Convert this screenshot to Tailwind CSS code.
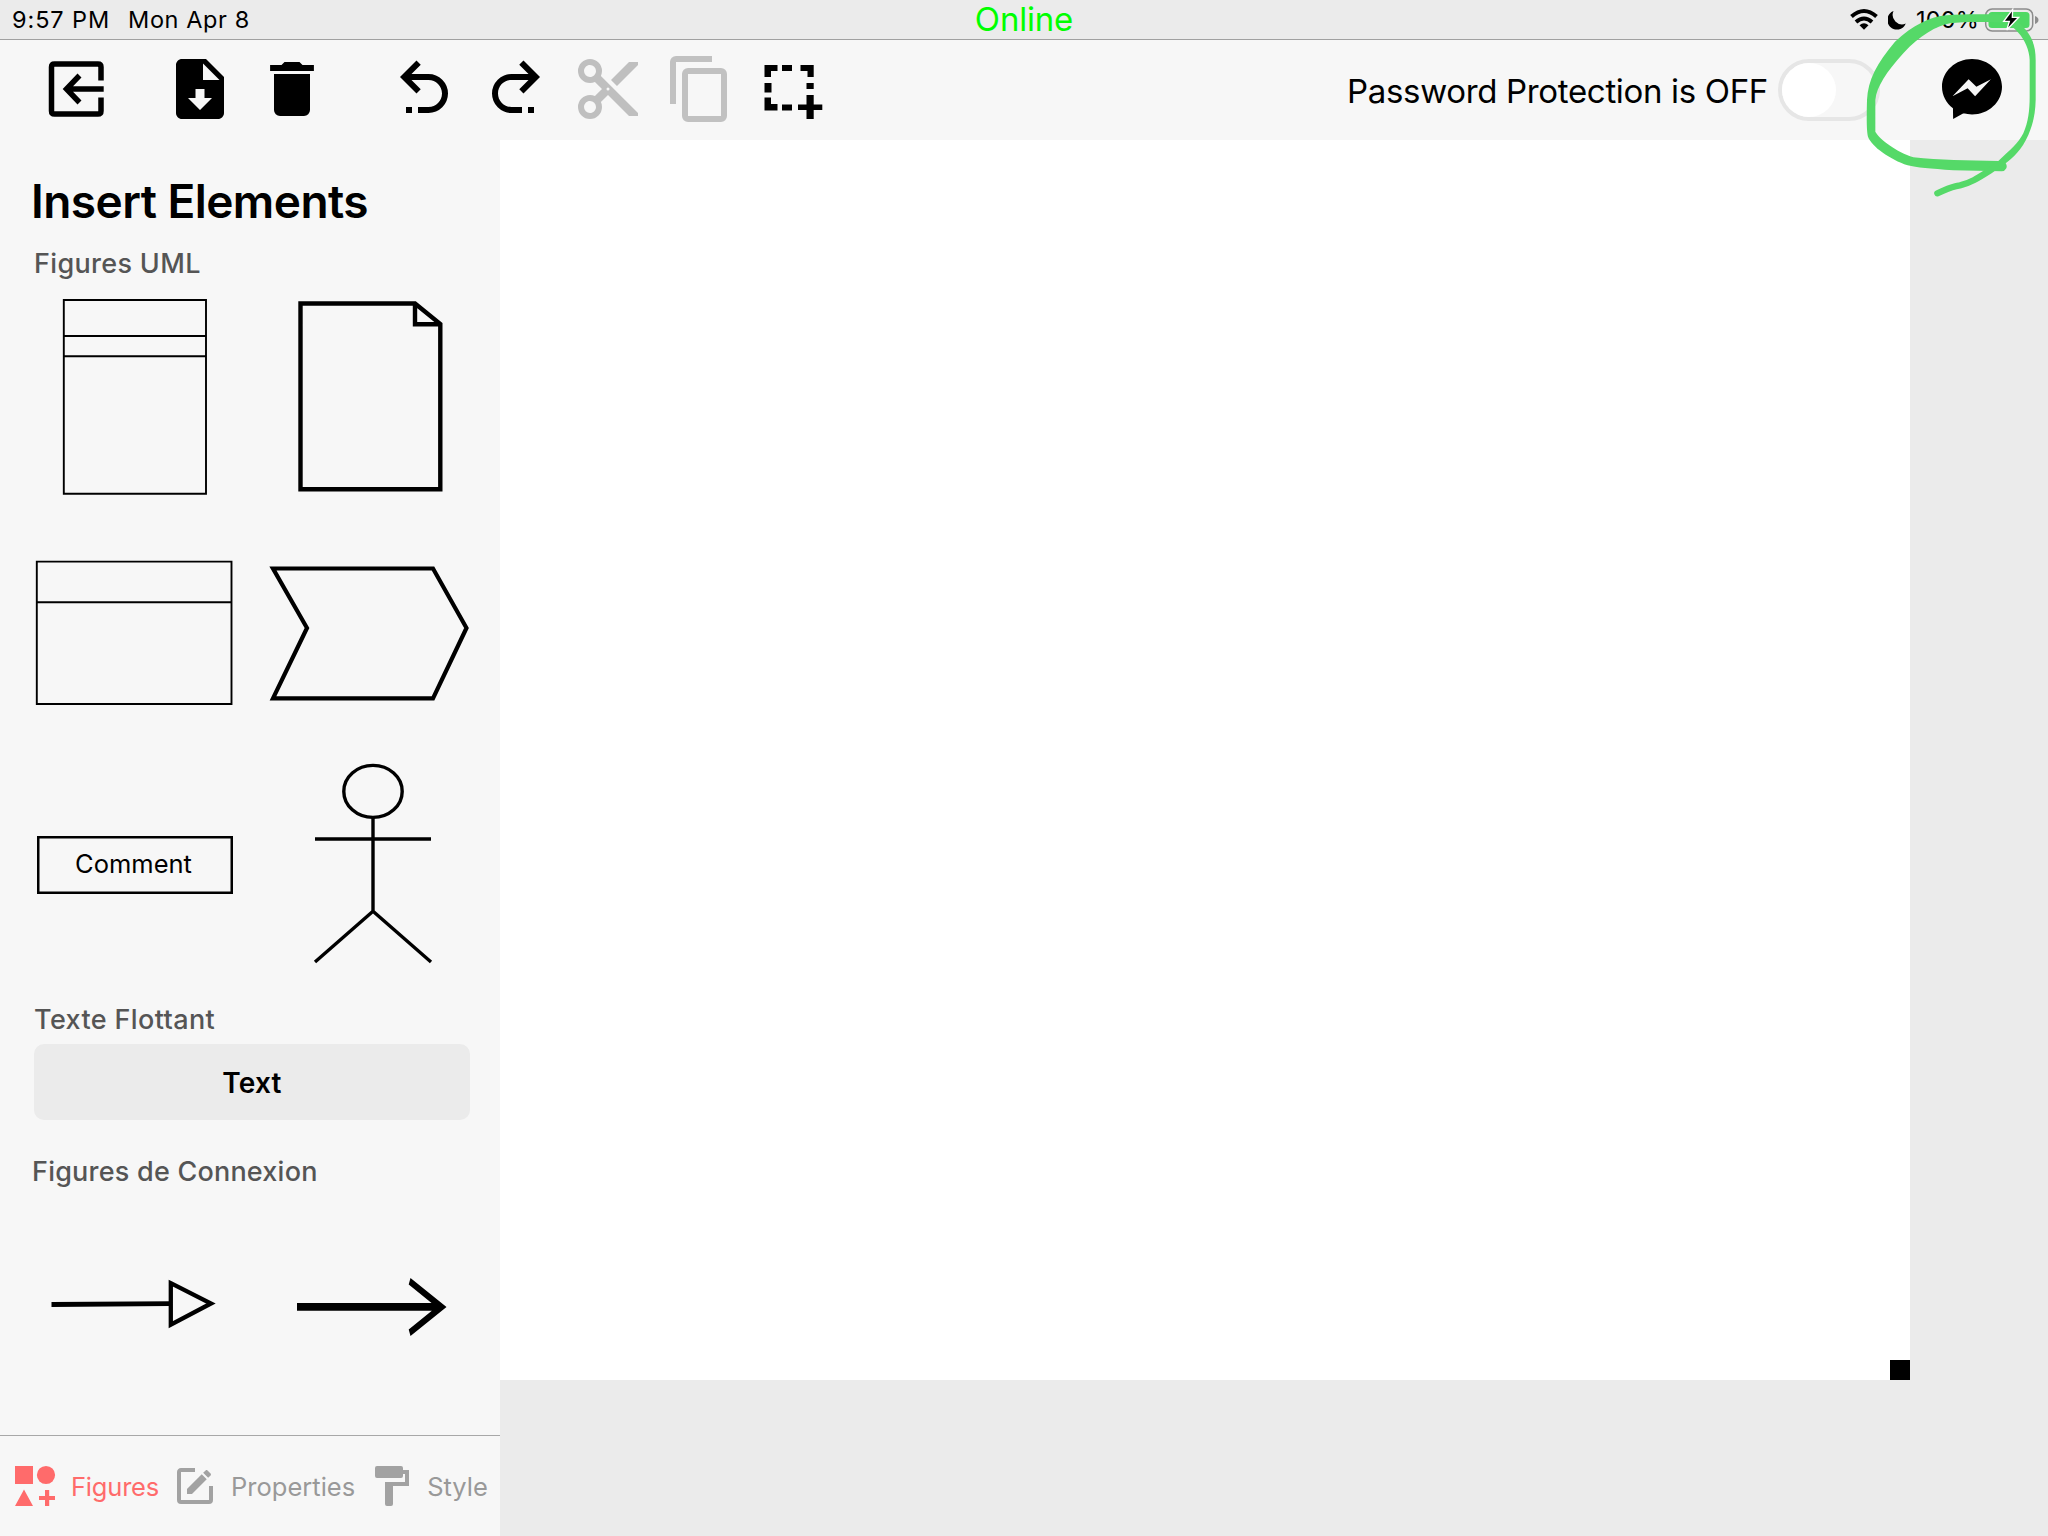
<!DOCTYPE html>
<html lang="en">
<head>
<meta charset="utf-8">
<title>Canvas editor</title>
<script src="https://cdn.jsdelivr.net/npm/@tailwindcss/browser@4"></script>
</head>
<body class="bg-[#ebebeb] text-black font-['Inter',sans-serif]">
<div class="relative w-[2048px] h-[1536px] overflow-hidden flex flex-col">
  <!-- Status bar -->
  <header class="h-10 shrink-0 border-b border-[#a0a0a0] grid grid-cols-[1fr_auto_1fr] items-center">
    <div class="flex items-center pl-3 pt-px gap-[18px] text-[23.5px] leading-[38px]">
      <span class="tracking-[0.9px]">9:57 PM</span>
      <span class="tracking-[0.6px]">Mon Apr 8</span>
    </div>
    <span class="text-[33px] leading-[39px] tracking-[-0.2px] text-[#00ff00]">Online</span>
    <div class="flex items-center justify-end">
      <svg class="w-[28px] h-[39px]" viewBox="1849 0 28 39" fill="none" stroke="#000" stroke-width="4">
        <path d="M1850.500 16.500Q1863 5.500 1875.500 16.500M1855 22Q1863 15 1871 22"/>
        <path d="M1858.500 25.200Q1863 21.500 1867.500 25.200L1863 29.800Z" fill="#000" stroke="none"/>
      </svg>
      <svg class="w-[18px] h-[39px] ml-[10px]" viewBox="1887 0 18 39"><path d="M1892.500 11A9.600 9.600 0 1 0 1904.800 23.600A9.500 9.500 0 0 1 1892.500 11Z"/></svg>
      <span class="text-[23.5px] leading-[38px] pt-px ml-[10px] mr-[5px] tracking-[0.2px]">100%</span>
      <svg class="w-[64px] h-[39px]" viewBox="1984 0 64 39">
        <rect x="1985.700" y="9" width="47" height="22" rx="6.500" fill="none" stroke="#8c8c8c" stroke-width="1.500"/>
        <rect x="1988.500" y="12" width="41" height="16" rx="3.500" fill="#4fd964"/>
        <path d="M2035 16Q2038.500 17.500 2038.500 20T2035 24Z" fill="#8c8c8c"/>
      </svg>
    </div>
  </header>

  <!-- Toolbar -->
  <div class="h-[100px] shrink-0 bg-[#f7f7f7] flex pt-[13px]">
    <svg class="w-[72px] h-[72px] ml-10" viewBox="40 53 72 72" fill="none" stroke="#000" stroke-width="5.500">
      <path d="M101 80.500V67Q101 64 98 64H54.500Q51.500 64 51.500 67V111Q51.500 114 54.500 114H98Q101 114 101 111V97.500"/>
      <path d="M103.700 89H68M79.500 75.500L66.500 89L79.500 102.500"/>
    </svg>
    <svg class="w-[72px] h-[72px] ml-[52px]" viewBox="0 0 24 24"><path d="M14,2H6C4.890,2 4,2.890 4,4V20C4,21.110 4.890,22 6,22H18C19.110,22 20,21.110 20,20V8L14,2M12,19L8,15H10.500V12H13.500V15H16L12,19M13,9V3.500L18.500,9H13Z"/></svg>
    <svg class="w-[72px] h-[72px] ml-[20px]" viewBox="0 0 24 24"><path d="M19.300,4H15.500L14.500,3H9.500L8.500,4H4.700V6H19.300M6,19A2,2 0 0,0 8,21H16A2,2 0 0,0 18,19V7H6V19Z"/></svg>
    <svg class="w-[72px] h-[72px] ml-[60px]" viewBox="0 0 24 24"><path d="M13.500,7A6.500,6.500 0 0,1 20,13.500A6.500,6.500 0 0,1 13.500,20H10V18H13.500C16,18 18,16 18,13.500C18,11 16,9 13.500,9H7.830L10.910,12.090L9.500,13.500L4,8L9.500,2.500L10.920,3.910L7.830,7H13.500M6,18H8V20H6V18Z"/></svg>
    <svg class="w-[72px] h-[72px] ml-[20px]" viewBox="0 0 24 24"><path d="M10.500,7A6.500,6.500 0 0,0 4,13.500A6.500,6.500 0 0,0 10.500,20H14V18H10.500C8,18 6,16 6,13.500C6,11 8,9 10.500,9H16.170L13.090,12.090L14.500,13.500L20,8L14.500,2.500L13.080,3.910L16.170,7H10.500M18,18H16V20H18V18Z"/></svg>
    <svg class="w-[72px] h-[72px] ml-[20px]" viewBox="0 0 24 24" fill="#bfbfbf"><path d="M19,3L13,9L15,11L22,4V3M12,12.500A0.500,0.500 0 0,1 11.500,12A0.500,0.500 0 0,1 12,11.500A0.500,0.500 0 0,1 12.500,12A0.500,0.500 0 0,1 12,12.500M6,20A2,2 0 0,1 4,18C4,16.890 4.900,16 6,16A2,2 0 0,1 8,18C8,19.110 7.100,20 6,20M6,8A2,2 0 0,1 4,6C4,4.890 4.900,4 6,4A2,2 0 0,1 8,6C8,7.110 7.100,8 6,8M9.640,7.640C9.870,7.140 10,6.590 10,6A4,4 0 0,0 6,2A4,4 0 0,0 2,6A4,4 0 0,0 6,10C6.590,10 7.140,9.870 7.640,9.640L10,12L7.640,14.360C7.140,14.130 6.590,14 6,14A4,4 0 0,0 2,18A4,4 0 0,0 6,22A4,4 0 0,0 10,18C10,17.410 9.870,16.860 9.640,16.360L12,14L19,21H22V20L9.640,7.640Z"/></svg>
    <svg class="w-[72px] h-[72px] ml-[20px]" viewBox="0 0 24 24" fill="#c1c1c1"><path d="M19,21H8V7H19M19,5H8A2,2 0 0,0 6,7V21A2,2 0 0,0 8,23H19A2,2 0 0,0 21,21V7A2,2 0 0,0 19,5M16,1H4A2,2 0 0,0 2,3V17H4V3H16V1Z"/></svg>
    <svg class="w-[72px] h-[72px] ml-[20px]" viewBox="756 53 72 72"><path d="M764.500 65H777.500V71H771V77H764.500ZM782 65H792V71H782ZM800.500 65H813.700V77H807.500V71H800.500ZM764.500 83H771.500V92.500H764.500ZM806.500 83H813.700V89H806.500ZM764.500 97.500H771V104H777.500V110.500H764.500ZM782 104.500H792V110.500H782ZM798 104.500H806.500V95H813.700V104.500H822.300V110H813.700V119H806.500V110H798Z"/></svg>
    <div class="ml-auto flex">
      <span class="text-[33px] leading-[76px] whitespace-nowrap mr-[10px] tracking-[-0.33px]">Password Protection is OFF</span>
      <div class="w-[102px] h-[62px] mt-[6px] mr-[56px] rounded-full border-4 border-[#e6e6e6]"><div class="size-[54px] rounded-full bg-white"></div></div>
      <svg class="w-[72px] h-[72px] mr-10" viewBox="0 0 24 24"><path d="M12,2C6.500,2 2,6.140 2,11.250C2,14.130 3.420,16.700 5.650,18.400L5.710,22L9.160,20.120L9.130,20.110C10.040,20.360 11,20.500 12,20.500C17.500,20.500 22,16.360 22,11.250C22,6.140 17.500,2 12,2M13.030,14.410L10.540,11.780L5.500,14.410L10.880,8.780L13.460,11.250L18.310,8.780L13.030,14.410Z"/></svg>
    </div>
  </div>

  <main class="flex flex-1 min-h-0">
    <!-- Sidebar -->
    <aside class="w-[500px] bg-[#f7f7f7] flex flex-col">
      <h1 class="mt-[31px] pl-[31px] text-[46px] leading-[60px] font-semibold tracking-[-0.55px]">Insert Elements</h1>
      <h2 class="mt-[15px] pl-[34px] text-[27px] leading-9 font-medium tracking-[0.33px] text-[#555]">Figures UML</h2>
      <div class="grid grid-cols-2 grid-rows-[258px_200px_262px]">
        <svg class="w-[250px] h-[258px]" viewBox="0 282 250 258" fill="none" stroke="#000" stroke-width="1.900"><path d="M63.800 300H206V493.700H63.800ZM63.800 336H206M63.800 356.200H206"/></svg>
        <svg class="w-[250px] h-[258px]" viewBox="250 282 250 258" fill="none" stroke="#000" stroke-width="4.400"><path d="M300.500 303.500H415L440.300 324V489.300H300.500ZM415 303.500V324.300H440"/></svg>
        <svg class="w-[250px] h-[200px]" viewBox="0 540 250 200" fill="none" stroke="#000" stroke-width="1.900"><path d="M36.800 561.600H231.500V704H36.800ZM36.800 602.300H231.500"/></svg>
        <svg class="w-[250px] h-[200px]" viewBox="250 540 250 200" fill="none" stroke="#000" stroke-width="4.200"><path d="M273 568.500H433L466.500 628L433 698.300H273L307 628Z"/></svg>
        <div class="ml-[37px] mt-24 w-[196px] h-[58px] border-2 border-black shadow-[inset_0_0_0_0.5px_#000] flex items-center justify-center text-[25.500px] leading-[50px] pr-[3px] pb-[2px]">Comment</div>
        <svg class="w-[250px] h-[261px]" viewBox="250 740 250 261" fill="none" stroke="#000" stroke-width="3.400"><ellipse cx="373" cy="791.400" rx="29.200" ry="26"/><path d="M373 818V911M315 839H431M315 962L373 911.300L431 962"/></svg>
      </div>
      <h2 class="pl-[34px] text-[27px] leading-9 font-medium tracking-[0.38px] text-[#555]">Texte Flottant</h2>
      <button class="mt-[6px] ml-[34px] w-[436px] h-[76px] rounded-[10px] bg-[#ebebeb] text-[28px] leading-[76px] pt-px font-semibold tracking-[0.2px]">Text</button>
      <h2 class="mt-[34px] pl-8 text-[27px] leading-9 font-medium tracking-[0.22px] text-[#555]">Figures de Connexion</h2>
      <div class="grid grid-cols-2 flex-1">
        <svg class="w-[250px] h-[240px]" viewBox="0 1190 250 240" fill="none" stroke="#000"><path d="M51.500 1304.500L170 1303.600" stroke-width="4.800"/><path d="M170.800 1283.200L211 1303.500L170.800 1324.700Z" stroke-width="4.300"/></svg>
        <svg class="w-[250px] h-[240px]" viewBox="250 1190 250 240"><path d="M297 1303H434V1310.700H297ZM410.500 1278L446.500 1307L410.500 1336L408.700 1329.500L434 1309V1305L408.700 1284.500Z"/></svg>
      </div>
      <nav class="h-[101px] shrink-0 border-t border-[#a8a8a8] flex items-center text-[25.500px] leading-[101px] text-[#999]">
        <svg class="w-12 h-12 ml-[11px]" viewBox="11 1463 48 48" fill="#ff6b6b"><path d="M15 1467H33V1485H15ZM24 1490.500L33 1507H15ZM45 1491H49.200V1497H55V1501H49.200V1507H45V1501H39V1497H45Z"/><circle cx="46" cy="1476" r="9.100"/></svg>
        <span class="ml-3 text-[#ff6b6b] tracking-[-0.2px]">Figures</span>
        <svg class="w-12 h-12 ml-3" viewBox="0 0 24 24" fill="#a2a2a2"><path d="M5,3C3.890,3 3,3.890 3,5V19A2,2 0 0,0 5,21H19A2,2 0 0,0 21,19V12H19V19H5V5H12V3H5M17.780,4C17.610,4 17.430,4.070 17.300,4.200L16.080,5.410L18.580,7.910L19.800,6.700C20.060,6.440 20.060,6 19.800,5.750L18.250,4.200C18.120,4.070 17.950,4 17.780,4M15.370,6.120L8,13.500V16H10.500L17.870,8.620L15.370,6.120Z"/></svg>
        <span class="ml-3">Properties</span>
        <svg class="w-12 h-12 ml-3" viewBox="0 0 24 24" fill="#a2a2a2"><path d="M18,4V3A1,1 0 0,0 17,2H5A1,1 0 0,0 4,3V7A1,1 0 0,0 5,8H17A1,1 0 0,0 18,7V6H19V10H9V21A1,1 0 0,0 10,22H12A1,1 0 0,0 13,21V12H21V4H18Z"/></svg>
        <span class="ml-3">Style</span>
      </nav>
    </aside>

    <!-- Drawing surface -->
    <section class="w-[1410px] h-[1240px] bg-white flex items-end justify-end">
      <div class="size-5 bg-black"></div>
    </section>
  </main>

  <!-- Pen annotation -->
  <svg class="absolute top-0 right-0 w-[268px] h-[210px]" viewBox="0 0 804 630" fill="#55d968">
    <path fill-rule="evenodd" d="M665 514L520 511C450 506 410 503 383 496C330 478 275 440 264 410C259 390 260 340 261 300C264 240 290 190 345 125C400 75 450 50 500 46C540 42 590 43 650 43C690 45 725 70 745 100C762 125 767 150 767 180V300C766 340 760 370 745 405C725 450 700 472 677 490A15 15 0 0 1 665 514ZM655 483C690 450 715 430 730 400C745 365 749 330 749 290V180C748 150 735 120 715 98C700 80 680 68 650 67C600 66 550 65 510 70C470 78 420 105 370 160C320 215 290 260 286 300V395C300 420 350 455 400 472C480 480 560 482 655 483Z"/>
    <path d="M648 500C600 530 575 548 540 556C510 560 500 568 472 580" fill="none" stroke="#55d968" stroke-width="19" stroke-linecap="round"/>
    <path d="M698 28L671 64H688L680 90L716 52H697Z" fill="#000" stroke="#fff" stroke-width="4"/>
  </svg>
</div>
</body>
</html>
